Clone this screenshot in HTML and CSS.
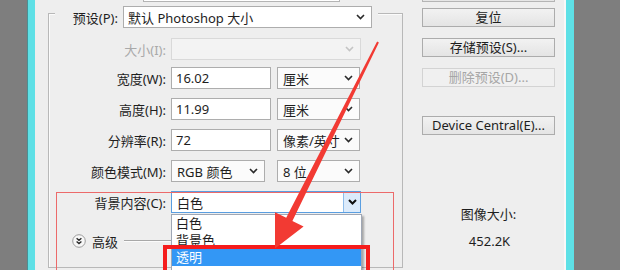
FILE: index.html
```html
<!DOCTYPE html>
<html lang="zh-CN">
<head>
<meta charset="utf-8">
<title>新建</title>
<link rel="stylesheet" href="styles.css">
</head>
<body>
<div class="screen">
  <div class="gutter"></div>
  <div class="frame-edge frame-left"></div>
  <div class="dialog">
    <div class="top-strip">
      <div class="name-tail"></div>
      <div class="btn-tail"></div>
    </div>
    <div class="dialog-body">
      <div class="group">
        <div class="preset-row">
          <span class="label">预设(P):</span>
          <div class="select preset-select">
            <span>默认 Photoshop 大小</span>
            <svg class="chev" width="9" height="6" viewBox="0 0 9 6"><path d="M1 1L4.5 4.5L8 1" /></svg>
          </div>
        </div>
        <div class="field-row row-size">
          <span class="label disabled">大小(I):</span>
          <div class="select wide disabled-box">
            <span></span>
            <svg class="chev light" width="9" height="6" viewBox="0 0 9 6"><path d="M1 1L4.5 4.5L8 1" /></svg>
          </div>
        </div>
        <div class="field-row row-first">
          <span class="label">宽度(W):</span>
          <div class="input">16.02</div>
          <div class="select unit">
            <span>厘米</span>
            <svg class="chev" width="9" height="6" viewBox="0 0 9 6"><path d="M1 1L4.5 4.5L8 1" /></svg>
          </div>
        </div>
        <div class="field-row">
          <span class="label">高度(H):</span>
          <div class="input">11.99</div>
          <div class="select unit">
            <span>厘米</span>
            <svg class="chev" width="9" height="6" viewBox="0 0 9 6"><path d="M1 1L4.5 4.5L8 1" /></svg>
          </div>
        </div>
        <div class="field-row">
          <span class="label">分辨率(R):</span>
          <div class="input">72</div>
          <div class="select unit">
            <span>像素/英寸</span>
            <svg class="chev" width="9" height="6" viewBox="0 0 9 6"><path d="M1 1L4.5 4.5L8 1" /></svg>
          </div>
        </div>
        <div class="field-row">
          <span class="label">颜色模式(M):</span>
          <div class="select mode">
            <span>RGB 颜色</span>
            <svg class="chev" width="9" height="6" viewBox="0 0 9 6"><path d="M1 1L4.5 4.5L8 1" /></svg>
          </div>
          <div class="select unit">
            <span>8 位</span>
            <svg class="chev" width="9" height="6" viewBox="0 0 9 6"><path d="M1 1L4.5 4.5L8 1" /></svg>
          </div>
        </div>
        <div class="field-row">
          <span class="label">背景内容(C):</span>
          <div class="select wide focused">
            <span>白色</span>
            <div class="drop-btn">
              <svg class="chev bold" width="9" height="6" viewBox="0 0 9 6"><path d="M1 1L4.5 4.5L8 1" /></svg>
            </div>
          </div>
        </div>
        <div class="adv-row">
          <svg class="adv-icon" width="14" height="14" viewBox="0 0 14 14">
            <circle cx="7" cy="7" r="6.3" />
            <path d="M4.6 4.3L7 6.3L9.4 4.3M4.6 7.5L7 9.5L9.4 7.5" />
          </svg>
          <span class="adv-text">高级</span>
          <div class="adv-line"></div>
        </div>
      </div>
      <div class="side">
        <div class="btn">复位</div>
        <div class="btn">存储预设(S)...</div>
        <div class="btn disabled-btn">删除预设(D)...</div>
        <div class="btn btn-device">Device Central(E)...</div>
        <div class="size-title">图像大小:</div>
        <div class="size-value">452.2K</div>
      </div>
    </div>
  </div>
  <div class="frame-edge frame-right"></div>
  <div class="gutter gutter-right"></div>

  <div class="mark-thin"></div>
  <ul class="dropdown">
    <li>白色</li>
    <li>背景色</li>
    <li class="selected">透明</li>
  </ul>
  <div class="mark-thick"></div>
  <svg class="arrow" width="620" height="270" viewBox="0 0 620 270">
    <polygon points="377.1,41.5 378.9,42.5 292.4,221.0 303.6,226.6 275,248.5 275.0,212.2 286.2,217.8" />
  </svg>
</div>
</body>
</html>
```

FILE: styles.css
```css
* { box-sizing: border-box; }

html, body {
  margin: 0;
  padding: 0;
}

body {
  width: 620px;
  height: 270px;
  overflow: hidden;
  background: #7f7f7f;
  font-family: "Noto Sans", "Noto Sans CJK SC", sans-serif;
  font-size: 13px;
  color: #1e1e1e;
}

.screen {
  position: relative;
  display: flex;
  width: 620px;
  height: 270px;
  overflow: hidden;
}

.gutter {
  width: 27px;
  flex: none;
  background: #7e7e7e;
}

.gutter-right {
  width: 46px;
}

.frame-edge {
  width: 8px;
  flex: none;
  background: #5ee0e6;
}

.frame-left {
  border-left: 1px solid #4a8f93;
}

.dialog {
  width: 531px;
  flex: none;
  background: #eeeeee;
  border-right: 2px solid #f8f8f8;
  display: flex;
  flex-direction: column;
}

.top-strip {
  height: 2px;
  display: flex;
  flex: none;
}

.name-tail {
  margin-left: 108px;
  width: 197px;
  border: 1px solid #b4b4b4;
  border-top: none;
  background: #ffffff;
}

.btn-tail {
  margin-left: 82px;
  width: 133px;
  border: 1px solid #b4b4b4;
  border-top: none;
  background: #e6e6e6;
}

.dialog-body {
  display: flex;
  padding-left: 13px;
  flex: 1;
}

.group {
  width: 355px;
  height: 255px;
  margin-top: 11px;
  border: 1px solid #b8b8b8;
  box-shadow: inset 1px 1px 0 #fbfbfb;
}

.preset-row {
  margin: -8px 0 0 6px;
  width: 323px;
  height: 22px;
  padding: 0 6px 0 0;
  background: #eeeeee;
  display: flex;
  align-items: center;
  justify-content: flex-end;
  gap: 5px;
}

.label {
  white-space: nowrap;
}

.field-row {
  display: flex;
  align-items: center;
  height: 22px;
  margin-top: 9px;
}

.field-row .label {
  width: 117px;
  text-align: right;
  margin-right: 5px;
  flex: none;
}

.row-size {
  margin-top: 10px;
}

.row-first {
  margin-top: 7px;
}

.disabled {
  color: #a9a9a9;
}

.select {
  height: 22px;
  display: flex;
  align-items: center;
  justify-content: space-between;
  padding: 0 6px 0 5px;
  background: #fbfbfb;
  border: 1px solid #adadad;
  white-space: nowrap;
}

.preset-select {
  width: 249px;
  background: #ffffff;
  padding-left: 4px;
}

.wide {
  width: 190px;
}

.disabled-box {
  background: #f3f3f3;
  border-color: #d9d9d9;
}

.unit {
  width: 83px;
  margin-left: 6px;
}

.mode {
  width: 94px;
  margin-right: 12px;
}

.mode + .unit {
  margin-left: 0;
}

.input {
  width: 100px;
  height: 22px;
  line-height: 20px;
  padding-left: 4px;
  background: #ffffff;
  border: 1px solid #adadad;
}

.chev {
  flex: none;
}

.chev path {
  fill: none;
  stroke: #2a2a2a;
  stroke-width: 1.6;
}

.chev.light path {
  stroke: #c4c4c4;
}

.chev.bold path {
  stroke: #101010;
  stroke-width: 2;
}

.focused {
  background: #ffffff;
  border-color: #5a9ee0;
  padding-right: 0;
}

.drop-btn {
  width: 17px;
  height: 20px;
  display: flex;
  align-items: center;
  justify-content: center;
  background: #dcebfb;
  border-left: 1px solid #8fbdea;
}

.adv-row {
  display: flex;
  align-items: center;
  height: 22px;
  margin-top: 17px;
  padding-left: 23px;
}

.adv-icon circle {
  fill: #f7f7f7;
  stroke: #9c9c9c;
  stroke-width: 1;
}

.adv-icon path {
  fill: none;
  stroke: #2a2a2a;
  stroke-width: 1.4;
}

.adv-text {
  margin-left: 6px;
}

.adv-line {
  margin-left: 6px;
  width: 50px;
  height: 2px;
  border-top: 1px solid #a8a8a8;
  border-bottom: 1px solid #fbfbfb;
}

.side {
  width: 133px;
  margin-left: 19px;
  display: flex;
  flex-direction: column;
  align-items: stretch;
}

.btn {
  height: 19px;
  line-height: 17px;
  text-align: center;
  border: 1px solid #acacac;
  background: linear-gradient(#f2f2f2, #e4e4e4);
  margin-top: 11px;
  white-space: nowrap;
}

.btn:first-child {
  margin-top: 6px;
}

.disabled-btn {
  color: #a6a6a6;
  border-color: #d3d3d3;
  background: #f0f0f0;
}

.btn-device {
  margin-top: 29px;
}

.size-title {
  margin-top: 70px;
  line-height: 18px;
  text-align: center;
}

.size-value {
  margin-top: 9px;
  line-height: 18px;
  text-align: center;
  padding-left: 2px;
}

.dropdown {
  position: absolute;
  left: 171px;
  top: 214px;
  width: 191px;
  height: 70px;
  margin: 0;
  padding: 0;
  list-style: none;
  background: #ffffff;
  border: 1px solid #9fa7b5;
  box-shadow: 2px 2px 2px rgba(0, 0, 0, 0.3);
}

.dropdown li {
  height: 17px;
  line-height: 17px;
  padding-left: 4px;
}

.dropdown .selected {
  background: #3397f5;
  color: #ffffff;
}

.mark-thin {
  position: absolute;
  left: 56px;
  top: 192px;
  width: 338px;
  height: 100px;
  border: 1px solid #ec6a6a;
}

.mark-thick {
  position: absolute;
  left: 163px;
  top: 245px;
  width: 207px;
  height: 40px;
  border: 4px solid #f51c1c;
}

.arrow {
  position: absolute;
  left: 0;
  top: 0;
  pointer-events: none;
}

.arrow polygon {
  fill: #f23a33;
}
```
